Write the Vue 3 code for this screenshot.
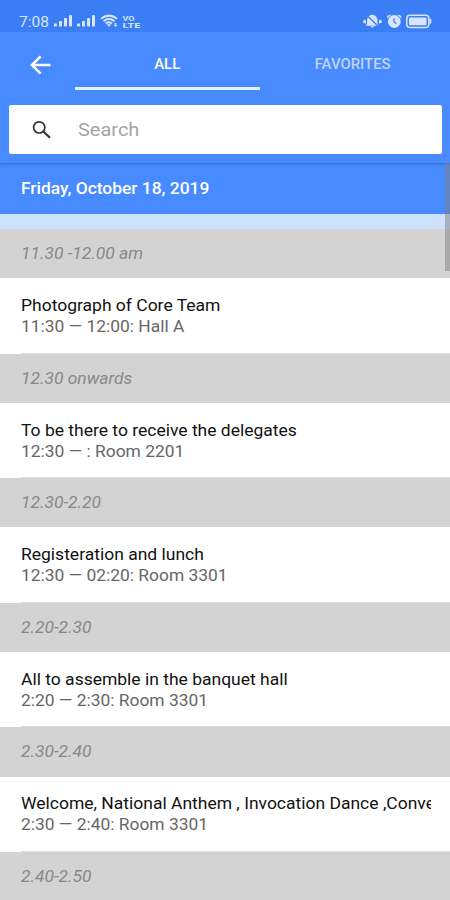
<script setup>
const sessions = [
  { slot: '11.30 -12.00 am', title: 'Photograph of Core Team', detail: '11:30 — 12:00: Hall A' },
  { slot: '12.30 onwards', title: 'To be there to receive the delegates', detail: '12:30 — : Room 2201' },
  { slot: '12.30-2.20', title: 'Registeration and lunch', detail: '12:30 — 02:20: Room 3301' },
  { slot: '2.20-2.30', title: 'All to assemble in the banquet hall', detail: '2:20 — 2:30: Room 3301' },
  { slot: '2.30-2.40', title: 'Welcome, National Anthem , Invocation Dance ,Conve', detail: '2:30 — 2:40: Room 3301' },
  { slot: '2.40-2.50' },
]
</script>

<template>
  <div class="screen">
    <header class="header">
      <div class="status">
        <span class="clock">7:08</span>
        <svg class="signals" width="90" height="17" viewBox="0 0 90 17" fill="currentColor">
          <g id="bars">
            <rect x="0" y="10.500" width="3" height="3" rx=".7" /><rect x="5" y="8" width="3" height="5.500" rx=".7" />
            <rect x="10" y="5" width="3" height="8.500" rx=".7" /><rect x="15" y="2" width="3" height="11.500" rx=".7" />
          </g>
          <use href="#bars" x="23" />
          <g fill="none" stroke="currentColor" stroke-width="2">
            <path d="M47 5.800Q55-.6 63 5.800M49.500 8.200Q55 3.800 60.500 8.200M51.800 10.500Q55 8 58 10.500" />
          </g>
          <path d="M52.900 11.300h4.200l-2.100 2.700zM61.500 9.500l1.800 2h-3.600zM61.500 14l1.800-2h-3.600z" />
          <text x="68.500" y="7.700" class="volte" textLength="12" lengthAdjust="spacingAndGlyphs">VO</text>
          <text x="68.500" y="15.300" class="volte" textLength="18" lengthAdjust="spacingAndGlyphs">LTE</text>
        </svg>
        <svg class="system" width="70" height="16" viewBox="0 0 70 16" fill="currentColor">
          <path d="M4 11V7.500Q4.500 2 9.200 1.800Q14 2 14.500 7.500V11L16 12.800H2.500zM7 13.200h4.500q-2.200 2.800-4.500 0M1 6.500l2 1v3l-3-.8zM18 6.500l-2 1v3l3-.8z" />
          <path d="M3 1.500L16 14" stroke="#3a7df4" stroke-width="1.300" />
          <circle cx="31.300" cy="8.500" r="6.400" />
          <path d="M31 5.200v3.600l2.300 2" fill="none" stroke="#3a7df4" stroke-width="1.200" />
          <path d="M24.300 5.500q-.8-4 4-3.700zM38.300 5.500q.8-4-4-3.700z" />
          <rect x="43.800" y="2.200" width="22" height="12.300" rx="3" fill="none" stroke="currentColor" stroke-width="1.500" />
          <rect x="46" y="4.500" width="17.500" height="7.700" rx="1" /><rect x="66.500" y="5.800" width="1.800" height="5" rx=".8" />
        </svg>
      </div>
      <nav class="nav">
        <button class="back" aria-label="Back">
          <svg width="24" height="24" viewBox="0 0 24 24" fill="none" stroke="currentColor" stroke-width="2.500">
            <path d="M22.500 12H4M12.600 3.300L3.900 12l8.700 8.700" />
          </svg>
        </button>
        <div class="tab active"><span class="all">ALL</span></div>
        <div class="tab"><span class="favorites">FAVORITES</span></div>
      </nav>
      <div class="search">
        <svg width="20" height="20" viewBox="0 0 20 20" fill="none" stroke="currentColor">
          <circle cx="7.200" cy="7.400" r="5.600" stroke-width="1.700" />
          <path d="M11.300 11.500L18 17.700" stroke-width="2.200" />
        </svg>
        <span class="placeholder">Search</span>
      </div>
    </header>
    <main class="schedule">
      <h1 class="date"><span class="wide">Friday, October 18, 2019</span></h1>
      <div class="spacer"></div>
      <section v-for="session in sessions" :key="session.slot" class="session">
        <h2 class="slot"><span class="wide">{{ session.slot }}</span></h2>
        <div v-if="session.title" class="entry">
          <div class="title">{{ session.title }}</div>
          <div class="detail">{{ session.detail }}</div>
        </div>
      </section>
      <div class="scrollbar"></div>
    </main>
  </div>
</template>

<style>
body { margin: 0; overflow: hidden; }
</style>

<style scoped>
* { box-sizing: border-box; }
.screen { width: 450px; height: 900px; overflow: hidden; display: flex; flex-direction: column; background: #fff; font-family: Roboto, sans-serif; }
.header { height: 163px; flex: none; background: #488aff; color: #fff; }
.status { height: 32px; display: flex; align-items: flex-start; padding: 13px 17px 0 19px; background: #3a7df4; color: #d7e5ff; }
.clock { width: 35px; font-size: 15.500px; line-height: 18px; }
.signals { flex: none; }
.system { margin-left: auto; flex: none; }
.volte { font: bold 8px/7px Roboto, sans-serif; }
.nav { height: 58px; display: flex; padding-right: 5px; }
.back { width: 75px; padding: 0 0 4px 28px; border: 0; background: none; color: #fff; text-align: left; }
.back svg { display: block; transform: translateY(6px); }
.back { display: flex; align-items: flex-start; padding-top: 15px; }
.back svg { transform: none; margin-top: 6px; }
.tab { width: 185px; display: flex; justify-content: center; padding-top: 22px; border-bottom: 3px solid transparent; font-size: 14px; line-height: 20px; font-weight: 500; color: #bdd5ff; }
.tab span { display: block; transform: scaleX(1.065); }
.active { color: #fff; border-bottom-color: #e5efff; }
.search { height: 49px; margin: 15px 8px 0 9px; display: flex; align-items: center; padding: 0 23px; gap: 26px; border-radius: 2px; background: #fff; color: #333; }
.placeholder { font-size: 18px; color: #a4a4a4; transform: scaleX(1.11); transform-origin: left; }
.schedule { position: relative; flex: 1; }
.wide { display: inline-block; transform: scaleX(1.088); transform-origin: left; }
.date { height: 50.500px; margin: 0; padding: 0 21px; background: #488aff; box-shadow: inset 0 3px 3px -2px #316dcc; color: #fff; font-size: 16px; font-weight: 500; line-height: 51px; }
.spacer { height: 15.500px; background: #cde1fc; }
.session { height: 124.600px; }
.slot { height: 49.200px; margin: 0; padding: 0 21px; background: #d3d3d3; color: #888; font-size: 16px; font-weight: 400; font-style: italic; line-height: 50px; }
.entry { height: 75.400px; margin-left: 21px; padding: 16.800px 19px 0 0; border-bottom: 1px solid #dedede; }
.title, .detail { width: 375px; font-size: 16px; line-height: 21px; white-space: nowrap; overflow: hidden; transform: scaleX(1.093); transform-origin: left; }
.title { color: #111; }
.detail { color: #666; transform: scaleX(1.087); }
.scrollbar { position: absolute; top: 0; right: 0; width: 5px; height: 108px; background: rgba(128, 128, 128, .5); }
</style>
